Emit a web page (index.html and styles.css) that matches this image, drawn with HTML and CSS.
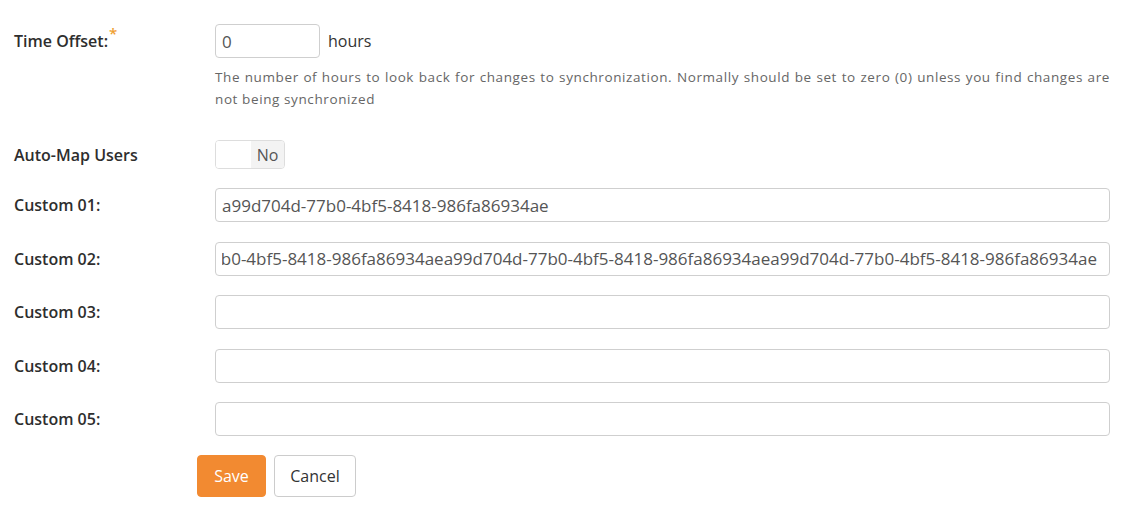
FILE: index.html
```html
<!DOCTYPE html>
<html>
<head>
<meta charset="utf-8">
<link rel="stylesheet" href="styles.css">
</head>
<body>
<form class="form">
  <div class="row row-top">
    <label class="label">Time Offset:<span class="req">*</span></label>
    <div class="field">
      <div class="inline">
        <input class="input input-short" type="text" value="0">
        <span class="unit">hours</span>
      </div>
      <p class="help">The number of hours to look back for changes to synchronization. Normally should be set to zero (0) unless you find changes are not being synchronized</p>
    </div>
  </div>
  <div class="row row-toggle">
    <label class="label">Auto-Map Users</label>
    <div class="field">
      <div class="toggle"><span class="toggle-off"></span><span class="toggle-no">No</span></div>
    </div>
  </div>
  <div class="row">
    <label class="label">Custom 01:</label>
    <div class="field"><input class="input" type="text" value="a99d704d-77b0-4bf5-8418-986fa86934ae"></div>
  </div>
  <div class="row">
    <label class="label">Custom 02:</label>
    <div class="field"><input class="input scroll-end" type="text" value="a99d704d-77b0-4bf5-8418-986fa86934aea99d704d-77b0-4bf5-8418-986fa86934aea99d704d-77b0-4bf5-8418-986fa86934ae"></div>
  </div>
  <div class="row">
    <label class="label">Custom 03:</label>
    <div class="field"><input class="input" type="text" value=""></div>
  </div>
  <div class="row">
    <label class="label">Custom 04:</label>
    <div class="field"><input class="input" type="text" value=""></div>
  </div>
  <div class="row">
    <label class="label">Custom 05:</label>
    <div class="field"><input class="input" type="text" value=""></div>
  </div>
  <div class="actions">
    <button type="button" class="btn btn-save">Save</button>
    <button type="button" class="btn btn-cancel">Cancel</button>
  </div>
</form>
<script>
  document.querySelectorAll('.scroll-end').forEach(function (el) { el.scrollLeft = el.scrollWidth; });
</script>
</body>
</html>
```
FILE: styles.css
```css
* { box-sizing: border-box; }
html, body { margin: 0; padding: 0; background: #fff; }
body {
  font-family: "Open Sans", "DejaVu Sans", sans-serif;
  color: #333;
}
.form {
  padding: 24px 35px 0 14px;
  width: 1145px;
}
.row {
  display: flex;
  align-items: center;
  margin-bottom: 19.5px;
}
.row-top { align-items: flex-start; margin-bottom: 30px; }
.row-toggle { margin-bottom: 19px; }
.label {
  width: 201px;
  flex: none;
  font-size: 16px;
  font-weight: 600;
  color: #2e2e2e;
  line-height: 34px;
}
.row-toggle .label { line-height: 27px; padding-top: 2px; }
.req {
  color: #f0a030;
  font-size: 15px;
  vertical-align: top;
  position: relative;
  top: -8px;
  margin-left: 1px;
}
.field { flex: 1; min-width: 0; }
.inline { display: flex; align-items: center; }
.input {
  display: block;
  width: 100%;
  height: 34px;
  border: 1px solid #cfcfcf;
  border-radius: 4px;
  padding: 0 12px 0 6px;
  font-family: "Open Sans", "DejaVu Sans", sans-serif;
  font-size: 17px;
  color: #555;
  background: #fff;
  outline: none;
}
.input-short { width: 105px; }
.unit {
  margin-left: 8px;
  font-size: 16px;
  color: #333;
}
.help {
  margin: 8px 0 0;
  font-size: 13.5px;
  letter-spacing: 0.6px;
  line-height: 22px;
  color: #666;
  text-align: justify;
}
.toggle {
  display: flex;
  width: 70px;
  height: 29px;
  border: 1px solid #ddd;
  border-radius: 4px;
  overflow: hidden;
}
.toggle-off { width: 35px; background: #fff; }
.toggle-no {
  flex: 1;
  background: #f3f3f3;
  font-size: 16px;
  color: #555;
  display: flex;
  align-items: center;
  justify-content: center;
}
.actions {
  display: flex;
  gap: 8px;
  margin: -1px 0 0 183px;
}
.btn {
  height: 42px;
  border-radius: 4px;
  font-family: "Open Sans", "DejaVu Sans", sans-serif;
  font-size: 16px;
  padding: 0 15px;
  cursor: pointer;
}
.btn-save {
  background: #f28a31;
  border: 1px solid #f28a31;
  color: #fff;
  width: 69px;
}
.btn-cancel {
  background: #fff;
  border: 1px solid #ccc;
  color: #333;
  width: 82px;
}
```
